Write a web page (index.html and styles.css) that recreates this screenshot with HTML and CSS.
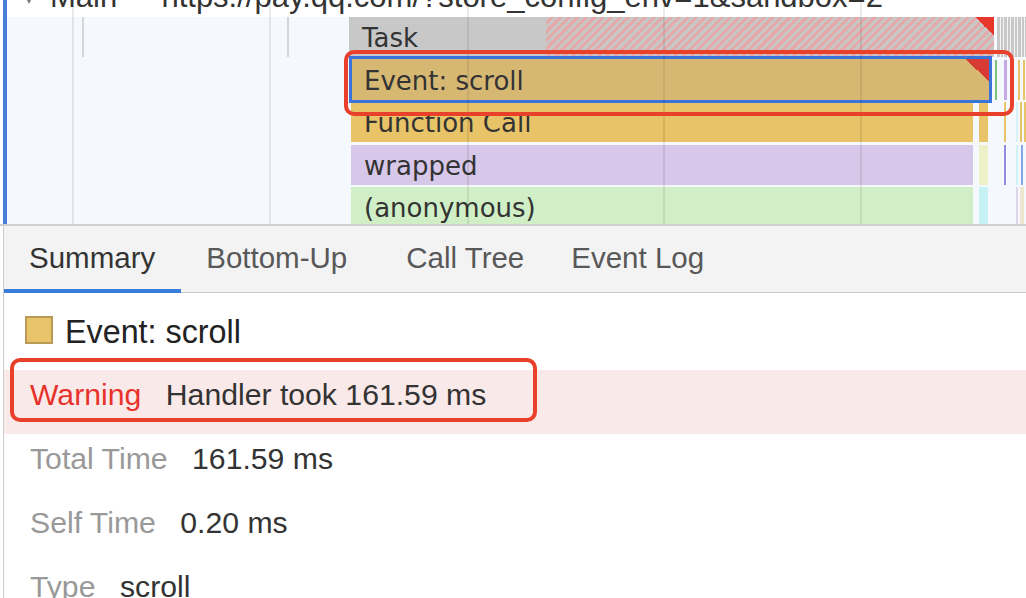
FILE: index.html
```html
<!DOCTYPE html>
<html>
<head>
<meta charset="utf-8">
<link rel="stylesheet" href="styles.css">
</head>
<body>
<div class="app">
  <div class="timeline">
    <div class="track-head">
      <span class="caret"></span>
      <span class="track-title">Main — https://pay.qq.com/?store_config_env=1&amp;sandbox=2</span>
    </div>
    <div class="flame">
      <div class="tick tick-a"></div>
      <div class="tick tick-b"></div>
      <div class="bar task"><span class="task-plain">Task</span><span class="task-long"></span><span class="flag"></span></div>
      <div class="bar event">Event: scroll<span class="flag flag-sel"></span></div>
      <div class="bar fn">Function Call</div>
      <div class="bar wrapped">wrapped</div>
      <div class="bar anon">(anonymous)</div>
      <div class="mini mini-fn"></div>
      <div class="mini mini-wr"></div>
      <div class="mini mini-an"></div>
      <div class="stripes"></div>
      <div class="thin t1"></div>
      <div class="thin t2"></div>
      <div class="thin t3"></div>
      <div class="thin t4"></div>
      <div class="thin t5"></div>
      <div class="thin t6"></div>
      <div class="thin t7"></div>
      <div class="thin t8"></div>
      <div class="thin t9"></div>
      <div class="thin t10"></div>
      <div class="thin t11"></div>
      <div class="thin t12"></div>
      <div class="thin t13"></div>
      <div class="thin t14"></div>
    </div>
    <div class="gridline g1"></div>
    <div class="gridline g2"></div>
    <div class="gridline g3"></div>
    <div class="gridline g4"></div>
    <div class="gridline g5"></div>
    <div class="callout callout-flame"></div>
  </div>
  <div class="details">
    <div class="tabs">
      <div class="tab active">Summary</div>
      <div class="tab tab-wide">Bottom-Up</div>
      <div class="tab tab-narrow">Call Tree</div>
      <div class="tab">Event Log</div>
    </div>
    <div class="summary">
      <div class="title"><span class="swatch"></span><span class="title-text">Event: scroll</span></div>
      <div class="row warn">
        <span class="label warn-label">Warning</span><span class="value">Handler took 161.59 ms</span>
        <div class="callout callout-warn"></div>
      </div>
      <div class="row"><span class="label">Total Time</span><span class="value">161.59 ms</span></div>
      <div class="row"><span class="label">Self Time</span><span class="value">0.20 ms</span></div>
      <div class="row"><span class="label">Type</span><span class="value">scroll</span></div>
    </div>
  </div>
</div>
</body>
</html>
```

FILE: styles.css
```css
html, body {
  margin: 0;
  padding: 0;
  background: #fff;
  overflow: hidden;
}
.app {
  width: 1026px;
  height: 598px;
  overflow: hidden;
  font-family: "Liberation Sans", Arial, sans-serif;
  color: #333;
}

/* ---------- timeline ---------- */
.timeline {
  position: relative;
  height: 224px;
  border-bottom: 2px solid #cfcfcf;
}
.timeline::before {
  content: "";
  position: absolute;
  left: 3px;
  top: 0;
  width: 4px;
  height: 224px;
  background: #4a7fd9;
  z-index: 3;
}
.track-head {
  height: 17px;
  overflow: hidden;
  position: relative;
  white-space: nowrap;
  font-size: 31px;
  color: #333;
}
.caret {
  position: absolute;
  left: 24px;
  top: -6px;
  width: 0;
  height: 0;
  border-left: 5px solid transparent;
  border-right: 5px solid transparent;
  border-top: 10px solid #7a7a7a;
}
.track-title {
  display: block;
  margin-top: -20px;
  margin-left: 50px;
  line-height: 34px;
  word-spacing: -2px;
}
.flame {
  position: relative;
  height: 207px;
  margin-left: 7px;
  background: #f5f8fd;
  overflow: hidden;
  font-family: "DejaVu Sans", sans-serif;
  font-size: 26px;
  color: #333;
}
.tick {
  position: absolute;
  top: 0;
  width: 2px;
  height: 40px;
  background: #d4d6d9;
}
.tick-a { left: 75px; }
.tick-b { left: 280px; }

.bar {
  position: absolute;
  height: 40px;
  line-height: 40px;
  padding-top: 1px;
  box-sizing: border-box;
  padding-left: 13px;
  white-space: nowrap;
  overflow: hidden;
}
.task {
  left: 342px;
  top: 0;
  width: 645px;
  padding: 0;
  display: flex;
}
.task-plain {
  width: 197px;
  background: #c8c8c8;
  padding-left: 13px;
  padding-top: 1px;
  box-sizing: border-box;
}
.task-long {
  flex: 1;
  background: repeating-linear-gradient(-45deg, #c9c6c6 0 3px, #e4a9a8 3px 6px);
}
.flag {
  position: absolute;
  right: 0;
  top: 0;
  width: 19px;
  height: 19px;
  background: linear-gradient(to bottom left, #e8362a 50%, transparent 50%);
}
.event {
  left: 342px;
  top: 39px;
  width: 643px;
  height: 47px;
  line-height: 40px;
  padding-top: 2px;
  padding-left: 12px;
  background: #d6b873;
  border: 3px solid #3a74da;
  z-index: 1;
}
.flag-sel {
  width: 24px;
  height: 22px;
  background: linear-gradient(to bottom left, #d83b33 50%, transparent 50%);
}
.fn { left: 344px; top: 85px; width: 622px; background: #e8c367; }
.wrapped { left: 344px; top: 127.5px; width: 622px; background: #d7c7e9; }
.anon { left: 344px; top: 170px; width: 622px; background: #d0efc6; }

.mini {
  position: absolute;
  left: 972px;
  width: 9px;
  height: 40px;
}
.mini-fn { top: 85px; background: #e8c367; }
.mini-wr { top: 127.5px; background: #eef1c8; }
.mini-an { top: 170px; background: #c7f1f4; }

.stripes {
  position: absolute;
  left: 990px;
  top: 0;
  width: 36px;
  height: 40px;
  background: repeating-linear-gradient(90deg, #c8c8c8 0 3px, #f4f4f4 3px 4px, #c8c8c8 4px 6px, #f4f4f4 6px 7px);
}
.thin {
  position: absolute;
  width: 2px;
  height: 40px;
}
.t1 { left: 988px; top: 42.5px; background: #7cc07a; }
.t2 { left: 997px; top: 42.5px; background: #c5a9e4; width: 3px; }
.t3 { left: 1003px; top: 42.5px; background: #e8c367; width: 3px; }
.t4 { left: 1011px; top: 42.5px; background: #e8c367; }
.t5 { left: 1016px; top: 42.5px; background: #e8c367; }
.t6 { left: 997px; top: 85px; background: #e8c367; }
.t7 { left: 1009px; top: 85px; background: #d6f2f2; }
.t8 { left: 1013px; top: 85px; background: #e8c367; }
.t9 { left: 1017px; top: 85px; background: #e8c367; }
.t10 { left: 997px; top: 127.5px; background: #9a88dc; }
.t11 { left: 1009px; top: 127.5px; background: #cdf3f3; }
.t12 { left: 1014px; top: 127.5px; background: #86a7e6; }
.t13 { left: 1009px; top: 170px; background: #ddd6e9; }
.t14 { left: 1013px; top: 170px; background: #efe6cf; width: 4px; }

.gridline {
  position: absolute;
  top: 0;
  width: 2px;
  height: 224px;
  background: rgba(0, 0, 0, 0.08);
  z-index: 2;
}
.g1 { left: 72px; }
.g2 { left: 269px; }
.g3 { left: 467px; }
.g4 { left: 663px; }
.g5 { left: 860px; }

.callout {
  position: absolute;
  border: 4px solid #e8402a;
  border-radius: 10px;
  box-sizing: border-box;
  z-index: 5;
}
.callout-flame {
  left: 344px;
  top: 50px;
  width: 670px;
  height: 66px;
}

/* ---------- details ---------- */
.details {
  margin-left: 3px;
  border-left: 1px solid #cccccc;
  height: 372px;
}
.tabs {
  display: flex;
  height: 67px;
  box-sizing: border-box;
  background: #f3f3f3;
  border-bottom: 1px solid #cccccc;
}
.tab {
  padding: 0 25px;
  height: 67px;
  box-sizing: border-box;
  line-height: 63px;
  font-size: 29.5px;
  color: #585858;
  border-bottom: 4px solid transparent;
}
.tab.active {
  color: #333;
  border-bottom-color: #3b7ddd;
  padding-right: 26px;
}
.tab.tab-wide {
  padding-right: 34px;
}
.tab.tab-narrow {
  padding-right: 22px;
}
.summary {
  font-size: 30.2px;
}
.title {
  display: flex;
  align-items: flex-start;
  padding: 23px 0 22px 21px;
}
.swatch {
  width: 28px;
  height: 28px;
  box-sizing: border-box;
  background: #e9c46a;
  border: 2px solid #b79a55;
}
.title-text {
  margin-left: 12px;
  font-size: 32.3px;
  line-height: 32px;
  color: #222;
}
.row {
  position: relative;
  display: flex;
  height: 64px;
  line-height: 50px;
  padding-left: 26px;
  white-space: nowrap;
}
.row.warn {
  background: #fae9e9;
}
.label {
  color: #999;
  margin-right: 24.5px;
}
.warn-label {
  color: #e6322b;
}
.value {
  color: #333;
}
.callout-warn {
  left: 6px;
  top: -12px;
  width: 527px;
  height: 64px;
}
```
